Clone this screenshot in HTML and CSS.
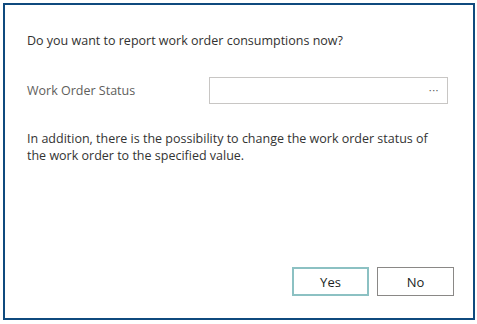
FILE: index.html
```html
<!DOCTYPE html>
<html lang="en">
  <head>
    <meta charset="UTF-8" />
    <title>Report Consumptions</title>
    <link rel="stylesheet" href="styles.css">
  </head>
  <body>
    <div class="dialog">
      <p class="question">Do you want to report work order consumptions now?</p>

      <div class="field">
        <label class="field-label" for="status">Work Order Status</label>
        <div class="lookup">
          <input type="text" id="status" />
          <span class="dots">&middot;&middot;&middot;</span>
        </div>
      </div>

      <p class="info">
        In addition, there is the possibility to change the work order status of
        the work order to the specified value.
      </p>

      <div class="actions">
        <button class="btn btn-default">Yes</button>
        <button class="btn">No</button>
      </div>
    </div>
  </body>
</html>
```

FILE: styles.css
```css
html, body {
  margin: 0;
  padding: 0;
  background: #fff;
}
body {
  padding: 3px 2px 4px 3px;
  font-family: "Open Sans", "Noto Sans", sans-serif;
  font-size: 12.5px;
  color: #333;
}
.dialog {
  box-sizing: border-box;
  height: 317px;
  border: 2px solid #0f4a7e;
  padding: 27px 19px 22px 22px;
  display: flex;
  flex-direction: column;
}
.question {
  margin: 0;
  line-height: 17px;
  color: #323130;
}
.field {
  display: flex;
  align-items: center;
  margin-top: 28px;
}
.field-label {
  flex: 0 0 182px;
  color: #605e5c;
}
.lookup {
  position: relative;
  flex: 0 0 239px;
}
.lookup input {
  box-sizing: border-box;
  width: 100%;
  height: 27px;
  border: 1px solid #c8c6c4;
  margin: 0;
  padding: 0 24px 0 8px;
  font: inherit;
  outline: none;
}
.dots {
  position: absolute;
  right: 9px;
  top: 5px;
  font-size: 11px;
  color: #605e5c;
  letter-spacing: 0.5px;
}
.info {
  margin: 26px 0 0;
  line-height: 17px;
  width: 410px;
}
.actions {
  margin-top: auto;
  display: flex;
  justify-content: flex-end;
  gap: 8px;
}
.btn {
  width: 77px;
  height: 29px;
  background: #fff;
  border: 1px solid #8a8886;
  font-family: "Open Sans", "Noto Sans", sans-serif;
  font-size: 13px;
  color: #201f1e;
  padding: 0;
}
.btn-default {
  border: 2px solid #8cc1c3;
}
```
